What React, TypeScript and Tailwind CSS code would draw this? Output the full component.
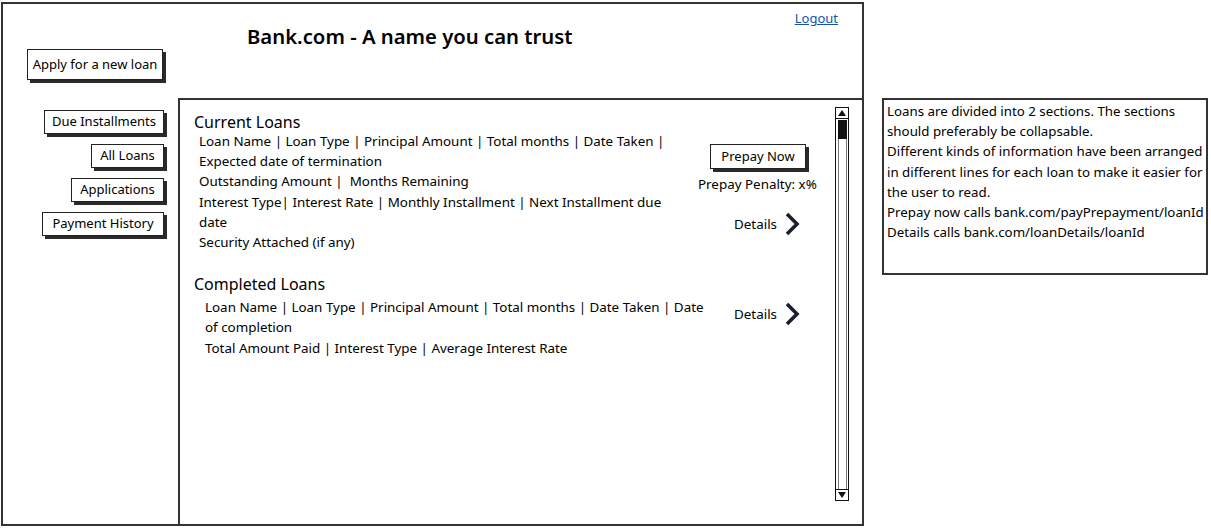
import React from "react";

const FONT = { fontFamily: '"Comic Sans MS", "Noto Sans", "DejaVu Sans", sans-serif' };

function SketchButton({ children, className = "" }: { children: React.ReactNode; className?: string }) {
  return (
    <div
      className={
        "flex items-center justify-center border-[1.5px] border-[#222] bg-white text-[13px] text-black shadow-[3px_3px_0_#2a2a2a] whitespace-nowrap " +
        className
      }
    >
      {children}
    </div>
  );
}

function Chevron() {
  return (
    <svg width="18" height="26" viewBox="0 0 18 26" className="ml-[6px]">
      <polyline points="4,3 14,13 4,23" fill="none" stroke="#1a1f2e" strokeWidth="3.6" strokeLinejoin="miter" strokeLinecap="butt" />
    </svg>
  );
}

function Details() {
  return (
    <div className="flex items-center text-[13.4px]">
      <span>Details</span>
      <Chevron />
    </div>
  );
}

function Scrollbar() {
  return (
    <div className="mt-[7px] mb-[23px] mr-[13px] flex w-[14px] flex-col border-[1.5px] border-[#111] bg-white">
      <div className="flex h-[11px] items-center justify-center border-b-[1.5px] border-[#111]">
        <svg width="8" height="6" viewBox="0 0 8 6">
          <polygon points="4,0 8,6 0,6" fill="#111" />
        </svg>
      </div>
      <div className="flex flex-1 flex-col px-[1.5px] pt-[1px]">
        <div className="h-[19px] bg-[#111]" />
        <div className="flex-1 border-x border-[#777]" />
      </div>
      <div className="flex h-[11px] items-center justify-center border-t-[1.5px] border-[#111]">
        <svg width="8" height="6" viewBox="0 0 8 6">
          <polygon points="0,0 8,0 4,6" fill="#111" />
        </svg>
      </div>
    </div>
  );
}

export default function App() {
  return (
    <div className="flex h-[528px] w-[1211px] bg-white text-black" style={FONT}>
      {/* main frame */}
      <div className="ml-[1px] mt-[2px] flex h-[524px] w-[863px] flex-col border-2 border-[#333]">
        {/* header */}
        <div className="flex h-[94px] shrink-0">
          <div className="pl-[24px] pt-[45px]">
            <SketchButton className="h-[31px] w-[136px] text-[13.2px]">Apply for a new loan</SketchButton>
          </div>
          <div className="ml-[84px] pt-[19px] text-[20.3px] font-semibold leading-[26px] whitespace-nowrap">
            Bank.com - A name you can trust
          </div>
          <div className="flex-1" />
          <div className="mr-[24px] pt-[6px] text-[13px] leading-[16px] text-[#1155aa] underline">Logout</div>
        </div>
        {/* body */}
        <div className="flex flex-1">
          <div className="flex w-[175px] shrink-0 flex-col items-end gap-[10px] pr-[14px] pt-[12px]">
            <SketchButton className="h-[24px] w-[120px]">Due Installments</SketchButton>
            <SketchButton className="h-[24px] w-[73px]">All Loans</SketchButton>
            <SketchButton className="h-[24px] w-[93px]">Applications</SketchButton>
            <SketchButton className="h-[24px] w-[122px]">Payment History</SketchButton>
          </div>
          <div className="flex flex-1 border-l-2 border-t-2 border-[#333]">
            <div className="flex flex-1 flex-col pl-[14px] pt-[13px]">
              {/* current loans */}
              <div className="text-[16px] leading-[18px]">Current Loans</div>
              <div className="flex">
                <div className="w-[493px] shrink-0 pl-[5px] text-[13.4px] leading-[20.2px]">
                  <div>Loan Name | Loan Type | Principal Amount | Total months | Date Taken | Expected date of termination</div>
                  <div>Outstanding Amount |&nbsp; Months Remaining</div>
                  <div>Interest Type| Interest Rate | Monthly Installment | Next Installment due date</div>
                  <div>Security Attached (if any)</div>
                </div>
                <div className="flex flex-col items-start pt-[13px]">
                  <SketchButton className="ml-[23px] h-[25px] w-[96px] text-[13.6px]">Prepay Now</SketchButton>
                  <div className="ml-[11px] mt-[5px] text-[13.4px] leading-[20px] whitespace-nowrap">Prepay Penalty: x%</div>
                  <div className="ml-[47px] mt-[17px]">
                    <Details />
                  </div>
                </div>
              </div>
              {/* completed loans */}
              <div className="mt-[23px] text-[16px] leading-[18px]">Completed Loans</div>
              <div className="mt-[4px] flex">
                <div className="w-[511px] shrink-0 pl-[11px] text-[13.4px] leading-[20.2px]">
                  <div>Loan Name | Loan Type | Principal Amount | Total months | Date Taken | Date of completion</div>
                  <div>Total Amount Paid | Interest Type | Average Interest Rate</div>
                </div>
                <div className="flex flex-col items-start">
                  <div className="ml-[29px] mt-[4px]">
                    <Details />
                  </div>
                </div>
              </div>
            </div>
            <Scrollbar />
          </div>
        </div>
      </div>
      {/* note */}
      <div className="ml-[18px] mt-[98px] h-[177px] w-[326px] border-2 border-[#333] pl-[3px] pt-[1px] text-[13.3px] leading-[20.2px]">
        <div>Loans are divided into 2 sections. The sections should preferably be collapsable.</div>
        <div>Different kinds of information have been arranged in different lines for each loan to make it easier for the user to read.</div>
        <div>Prepay now calls bank.com/payPrepayment/loanId</div>
        <div>Details calls bank.com/loanDetails/loanId</div>
      </div>
    </div>
  );
}
